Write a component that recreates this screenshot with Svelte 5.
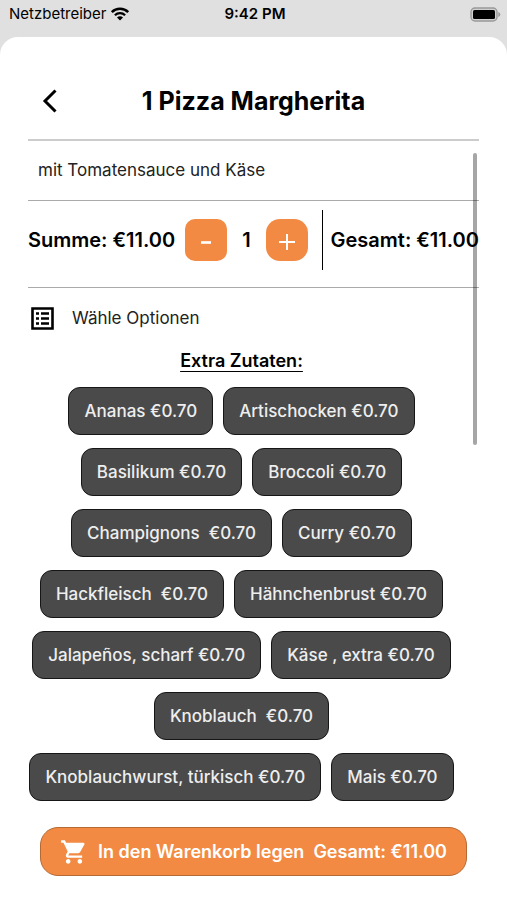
<script>
	const price = 11;

	let quantity = $state(1);
	let extras = $state([
		{ name: 'Ananas', price: 0.7, selected: false },
		{ name: 'Artischocken', price: 0.7, selected: false },
		{ name: 'Basilikum', price: 0.7, selected: false },
		{ name: 'Broccoli', price: 0.7, selected: false },
		{ name: 'Champignons ', price: 0.7, selected: false },
		{ name: 'Curry', price: 0.7, selected: false },
		{ name: 'Hackfleisch ', price: 0.7, selected: false },
		{ name: 'Hähnchenbrust', price: 0.7, selected: false },
		{ name: 'Jalapeños, scharf', price: 0.7, selected: false },
		{ name: 'Käse , extra', price: 0.7, selected: false },
		{ name: 'Knoblauch ', price: 0.7, selected: false },
		{ name: 'Knoblauchwurst, türkisch', price: 0.7, selected: false },
		{ name: 'Mais', price: 0.7, selected: false }
	]);

	let sum = $derived(
		price + extras.filter((e) => e.selected).reduce((total, e) => total + e.price, 0)
	);
	let total = $derived(sum * quantity);

	function formatPrice(value) {
		return '€' + value.toFixed(2);
	}

	function decrease() {
		if (quantity > 1) quantity -= 1;
	}

	function increase() {
		quantity += 1;
	}
</script>

<div class="screen">
	<div class="status-bar">
		<div class="carrier">
			<span>Netzbetreiber</span>
			<svg width="20" height="14" viewBox="0 0 20 14" aria-hidden="true">
				<path d="M1.8 5.2a11.6 11.6 0 0 1 16.4 0" fill="none" stroke="#000" stroke-width="2.5" />
				<path d="M4.9 8.3a7.2 7.2 0 0 1 10.2 0" fill="none" stroke="#000" stroke-width="2.3" />
				<path d="M7 10.6a4.2 4.2 0 0 1 6 0l-3 3z" />
			</svg>
		</div>
		<span class="clock">9:42 PM</span>
		<svg class="battery" width="31" height="15" viewBox="0 0 31 15" aria-hidden="true">
			<rect x="1" y="1" width="26" height="13" rx="4" fill="#d0d0d0" stroke="#999" stroke-width="1.4" />
			<rect x="3" y="3" width="22" height="9" rx="1.5" />
			<path d="M28.3 5v5c1.2-.4 2-1.4 2-2.5s-.8-2.1-2-2.5z" fill="#999" />
		</svg>
	</div>

	<main class="sheet">
		<header class="header">
			<button class="back" type="button" aria-label="Zurück">
				<svg width="16" height="24" viewBox="0 0 16 24" aria-hidden="true">
					<path d="M13.5 1.5 3 12l10.5 10.5" fill="none" stroke="#000" stroke-width="3" />
				</svg>
			</button>
			<h1>1 Pizza Margherita</h1>
		</header>

		<div class="content">
			<p class="description">mit Tomatensauce und Käse</p>

			<div class="amount">
				<span class="sum">Summe: {formatPrice(sum)}</span>
				<button class="step" type="button" aria-label="Weniger" onclick={decrease}>
					<svg width="18" height="20" viewBox="0 0 18 20" aria-hidden="true">
						<path d="M4 12.5h10" stroke="#fff" stroke-width="2.6" />
					</svg>
				</button>
				<span class="quantity">{quantity}</span>
				<button class="step plus" type="button" aria-label="Mehr" onclick={increase}>
					<svg width="18" height="20" viewBox="0 0 18 20" aria-hidden="true">
						<path d="M1 12h16M9 4v16" stroke="#fff" stroke-width="2" />
					</svg>
				</button>
				<span class="total">Gesamt: {formatPrice(total)}</span>
			</div>

			<div class="options-title">
				<svg width="24" height="24" viewBox="0 0 24 24" aria-hidden="true">
					<path d="M2.5 2.5h20v20h-20z" fill="none" stroke="#000" stroke-width="2.6" />
					<path d="M6 7.5h3M6 12.5h3M6 17.5h3M11 7.5h8M11 12.5h8M11 17.5h8" fill="none" stroke="#000" stroke-width="2.4" />
				</svg>
				<span>Wähle Optionen</span>
			</div>

			<section class="extras">
				<h2>Extra Zutaten:</h2>
				<div class="chips">
					{#each extras as extra (extra.name)}
						<button
							class="chip"
							class:selected={extra.selected}
							type="button"
							aria-pressed={extra.selected}
							onclick={() => (extra.selected = !extra.selected)}
						>{extra.name} {formatPrice(extra.price)}</button>
					{/each}
				</div>
			</section>

			<div class="scrollbar"></div>
		</div>

		<button class="cart" type="button">
			<svg width="28" height="28" viewBox="0 0 24 24" fill="#fff" aria-hidden="true">
				<path d="M7 18c-1.1 0-1.99.9-1.99 2S5.9 22 7 22s2-.9 2-2-.9-2-2-2zM1 2v2h2l3.6 7.59-1.35 2.45c-.16.28-.25.61-.25.96 0 1.1.9 2 2 2h12v-2H7.42c-.14 0-.25-.11-.25-.25l.03-.12.9-1.63h7.45c.75 0 1.41-.41 1.75-1.03l3.58-6.49A1 1 0 0 0 20 4H5.21l-.94-2H1zm16 16c-1.1 0-1.99.9-1.99 2s.89 2 1.99 2 2-.9 2-2-.9-2-2-2z" />
			</svg>
			<span>In den Warenkorb legen  Gesamt: {formatPrice(total)}</span>
		</button>
	</main>
</div>

<style>
	:global(body) {
		background: #fff;
	}

	.screen {
		min-height: 100vh;
		background: #e0e0e0;
		color: #000;
		font-family: Inter, 'Liberation Sans', sans-serif;
		font-size: 17px;
		line-height: 24px;
		display: flex;
		flex-direction: column;
	}

	button {
		font: inherit;
		color: inherit;
		border: none;
		padding: 0;
		cursor: pointer;
	}

	.status-bar {
		display: grid;
		grid-template-columns: 1fr auto 1fr;
		align-items: center;
		height: 28px;
		padding: 0 6px 0 9px;
		margin-bottom: 9px;
		font-size: 15px;
	}

	.carrier {
		display: flex;
		align-items: center;
		gap: 4px;
	}

	.clock {
		font-weight: 600;
	}

	.battery {
		justify-self: end;
	}

	.sheet {
		flex: 1;
		background: #fff;
		border-radius: 18px 18px 0 0;
		padding: 0 28px 24px;
	}

	.header {
		display: grid;
		grid-template-columns: 44px 1fr 44px;
		align-items: center;
		height: 104px;
		padding-top: 26px;
		box-sizing: border-box;
		border-bottom: 2px solid #ccc;
	}

	.back {
		display: grid;
		place-items: center;
		height: 44px;
		background: none;
	}

	h1 {
		margin: 0;
		font-size: 25px;
		font-weight: 700;
		text-align: center;
	}

	.content {
		position: relative;
	}

	.description {
		margin: 0;
		padding: 17px 10px 18px;
		border-bottom: 1px solid #aaa;
		color: #222;
	}

	.amount {
		display: flex;
		align-items: center;
		height: 87px;
		padding-bottom: 8px;
		box-sizing: border-box;
		border-bottom: 1px solid #aaa;
		font-size: 20px;
		font-weight: 600;
		white-space: nowrap;
	}

	.sum {
		margin-right: 10px;
	}

	.step {
		display: grid;
		place-items: center;
		flex: none;
		width: 42px;
		height: 42px;
		border-radius: 10px;
		background: #f28a43;
	}

	.plus {
		border-radius: 14px;
	}

	.quantity {
		flex: 1;
		text-align: center;
	}

	.total {
		margin-left: 14px;
		padding-left: 8px;
		border-left: 1px solid #000;
		line-height: 60px;
	}

	.options-title {
		display: flex;
		align-items: center;
		gap: 18px;
		padding: 18px 2px 19px;
		color: #222;
	}

	.extras {
		margin: 0 16px 0 -8px;
	}

	h2 {
		margin: 0 0 14px;
		font-size: 18px;
		font-weight: 600;
		text-align: center;
		text-decoration: underline;
		text-decoration-thickness: 1px;
		text-underline-offset: 4px;
	}

	.chips {
		display: flex;
		flex-wrap: wrap;
		justify-content: center;
		gap: 13px 10px;
	}

	.chip {
		height: 48px;
		padding: 0 15px;
		border: 1px solid #161616;
		border-radius: 12px;
		background: #4a4a4a;
		color: #eee;
		font-weight: 500;
		white-space: pre;
	}

	.chip.selected {
		background: #f28a43;
	}

	.scrollbar {
		position: absolute;
		top: 12px;
		right: 2px;
		width: 4px;
		height: 292px;
		border-radius: 2px;
		background: rgba(0, 0, 0, 0.35);
	}

	.cart {
		display: flex;
		align-items: center;
		justify-content: center;
		gap: 10px;
		width: calc(100% - 24px);
		height: 49px;
		margin: 26px 12px 0;
		border: 1px solid #b56a35;
		border-radius: 18px;
		background: #f28a43;
		color: #fff;
		font-size: 18px;
		font-weight: 600;
		white-space: pre;
	}
</style>
